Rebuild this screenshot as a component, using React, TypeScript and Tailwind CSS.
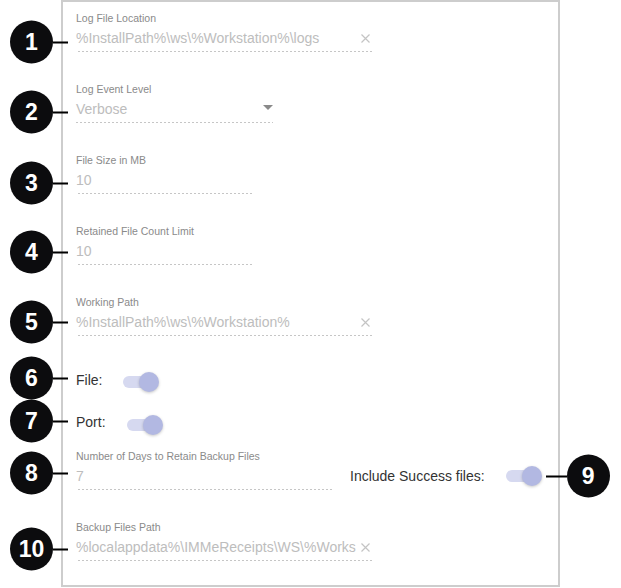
import React from 'react'

// Numbered callout bubble
function Badge({ n }: { n: number }) {
  return (
    <div className="w-[43px] h-[43px] shrink-0 rounded-full bg-[#0c0c0e] text-white font-bold text-[23px] leading-none flex items-center justify-center">
      {n}
    </div>
  )
}

function LeftCallout({ n, shift = '' }: { n: number; shift?: string }) {
  return (
    <div className={`absolute left-[-66px] top-1/2 -translate-y-1/2 flex items-center ${shift}`}>
      <Badge n={n} />
      <div className="w-[15px] h-[2px] bg-black" />
    </div>
  )
}

function ClearIcon() {
  return (
    <svg width="9" height="9" viewBox="0 0 9 9" className="shrink-0 mr-[3px]">
      <path d="M0.5 0.5 L8.5 8.5 M8.5 0.5 L0.5 8.5" stroke="#c4c4c4" strokeWidth="1.2" />
    </svg>
  )
}

function Field({
  label,
  value,
  width,
  n,
  shift,
  clear,
  select,
}: {
  label: string
  value: string
  width: string
  n: number
  shift?: string
  clear?: boolean
  select?: boolean
}) {
  return (
    <div className={width}>
      <div className="text-[10.5px] leading-[12px] text-[#8a8a8a]">{label}</div>
      <div className="relative h-[28px] flex items-center bg-[linear-gradient(to_right,#8c8c8c_1px,transparent_1px)] bg-[length:4px_1px] bg-repeat-x bg-bottom">
        <LeftCallout n={n} shift={shift} />
        <span className="flex-1 min-w-0 whitespace-nowrap text-[14px] leading-[20px] text-[#bdbdbd]">
          {value}
        </span>
        {clear && <ClearIcon />}
        {select && (
          <svg width="10" height="5" viewBox="0 0 10 5" className="shrink-0 mb-[3px]">
            <path d="M0 0 L10 0 L5 5 Z" fill="#8a8a8a" />
          </svg>
        )}
      </div>
    </div>
  )
}

function Toggle() {
  return (
    <div className="relative w-[36px] h-[20px] shrink-0">
      <div className="absolute left-0 top-[4px] w-[32px] h-[12px] rounded-full bg-[#d6d9f0]" />
      <div className="absolute right-0 top-0 w-5 h-5 rounded-full bg-[#b2b8e2] shadow-[0_1px_3px_rgba(0,0,0,0.22)]" />
    </div>
  )
}

export default function App() {
  return (
    <div className="w-[621px] h-[588px] bg-white font-['Liberation_Sans',Arial,sans-serif]">
      <div className="ml-[61px] w-[499px] h-[587px] border-2 border-[#cdcdcd] pt-[10px] pl-[13px]">
        <Field label="Log File Location" value="%InstallPath%\ws\%Workstation%\logs" width="w-[297px]" n={1} shift="mt-[4px]" clear />
        <div className="mt-[31px]">
          <Field label="Log Event Level" value="Verbose" width="w-[197px]" n={2} shift="mt-[3px]" select />
        </div>
        <div className="mt-[31px]">
          <Field label="File Size in MB" value="10" width="w-[177px]" n={3} shift="mt-[3px]" />
        </div>
        <div className="mt-[31px]">
          <Field label="Retained File Count Limit" value="10" width="w-[177px]" n={4} shift="mt-[1px]" />
        </div>
        <div className="mt-[31px]">
          <Field label="Working Path" value="%InstallPath%\ws\%Workstation%" width="w-[297px]" n={5} clear />
        </div>

        {/* toggles */}
        <div className="relative mt-[34px] h-[24px] flex items-center gap-[21px] text-[14px] text-[#333]">
          <LeftCallout n={6} shift="-mt-[4px]" />
          <span className="-mt-[4px]">File:</span>
          <Toggle />
        </div>
        <div className="relative mt-[19px] h-[24px] flex items-center gap-[21px] text-[14px] text-[#333]">
          <LeftCallout n={7} shift="-mt-[4px]" />
          <span className="-mt-[5px]">Port:</span>
          <Toggle />
        </div>

        <div className="mt-[13px] flex">
          <Field label="Number of Days to Retain Backup Files" value="7" width="w-[257px]" n={8} shift="-mt-[3px]" />
          <div className="ml-[17px] mt-[12px] h-[28px] flex items-center gap-[21px] text-[14px] text-[#333]">
            <span>Include Success files:</span>
            <div className="relative">
              <Toggle />
              <div className="absolute left-[calc(100%+4px)] top-1/2 -translate-y-1/2 flex items-center">
                <div className="w-[21px] h-[2px] bg-black" />
                <Badge n={9} />
              </div>
            </div>
          </div>
        </div>

        <div className="mt-[31px]">
          <Field label="Backup Files Path" value="%localappdata%\IMMeReceipts\WS\%Works" width="w-[297px]" n={10} shift="mt-[2px]" clear />
        </div>
      </div>
    </div>
  )
}
